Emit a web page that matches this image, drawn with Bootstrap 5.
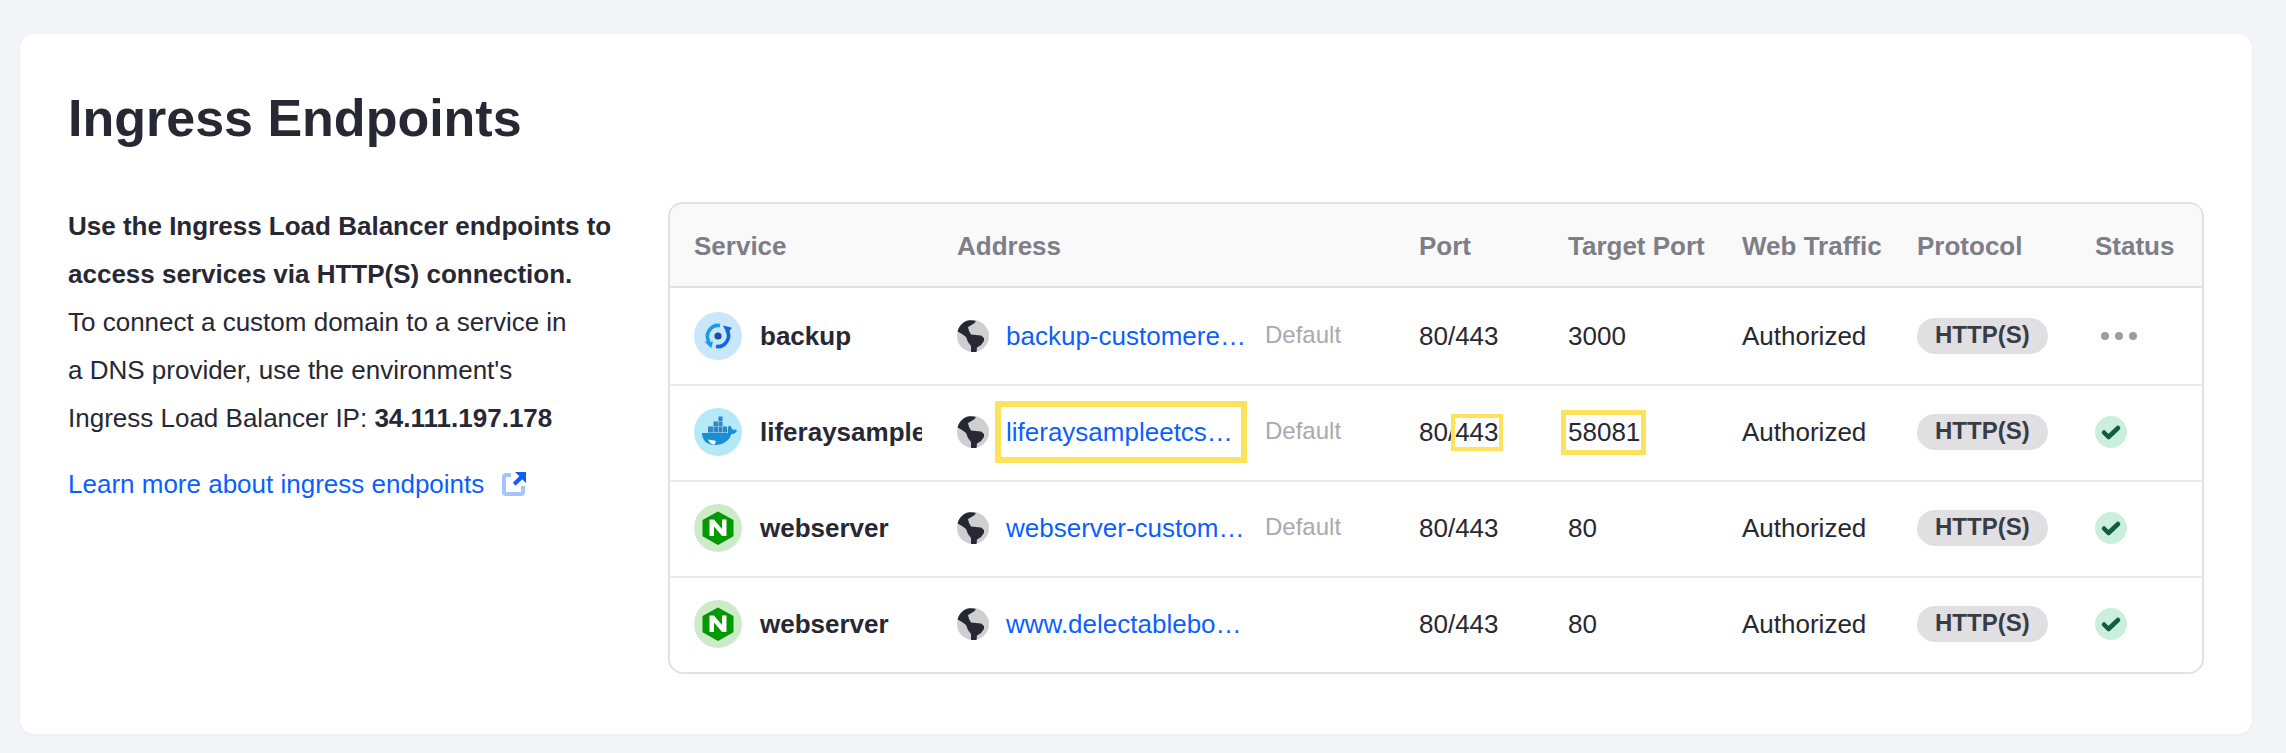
<!DOCTYPE html>
<html lang="en">
<head>
<meta charset="utf-8">
<title>Ingress Endpoints</title>
<link href="https://cdn.jsdelivr.net/npm/bootstrap@5.3.0/dist/css/bootstrap.min.css" rel="stylesheet">
<style>
html,body{height:753px;overflow:hidden}
body{background:#f4f5f9;font-family:"Liberation Sans",Arial,sans-serif;color:#272833;padding:34px 20px 0}
.panel{background:#fff;border-radius:14px;width:2232px;height:700px;padding:52px 48px;box-shadow:0 1px 4px rgba(0,0,0,.05)}
.panel h1{font-size:52px;line-height:64px;font-weight:700;margin:0 0 52px;font-family:"Liberation Sans",Arial,sans-serif;color:#272833}
.side{width:600px;flex:none;font-size:26px;line-height:48px}
.learn{display:flex;align-items:center;margin-top:18px;color:#0b5fff;text-decoration:none}
.learn svg{margin-left:18px}
.tbl-wrap{width:1536px;height:472px;border:2px solid #e1e1e3;border-radius:15px;overflow:hidden}
.etable{width:1532px;table-layout:fixed;border-collapse:separate;border-spacing:0;margin:0;font-size:26px}
.etable th{height:84px;background:#f9f9fa;color:#7d7e87;font-weight:700;padding:2px 0 0;vertical-align:middle;border-bottom:2px solid #e1e1e3;white-space:nowrap}
.etable td{height:96px;padding:0 0 2px;vertical-align:middle;border-bottom:2px solid #eaeaec;white-space:nowrap;color:#272833}
.etable tbody tr:first-child td{height:98px;padding-bottom:0}
.etable tr:last-child td{border-bottom:0;height:94px}
.etable .cell-first{padding-left:24px}
.svc{display:flex;align-items:center;gap:18px;width:228px;overflow:hidden;font-weight:700}
.svc svg{flex:none}
.addr{display:flex;align-items:center}
.addr svg{flex:none}
.addr a{display:block;width:241px;margin-left:17px;white-space:nowrap;color:#0b5fff;text-decoration:none}
.addr .hl{box-sizing:border-box;width:252px;height:62px;line-height:50px;margin-left:6px;padding:0 6px 0 5px;border:6px solid #fde35c}
.dflt{margin-left:18px;font-size:24px;color:#a9a9ae;position:relative;top:-1px}
.hlbox-port{display:inline-block;border:4px solid #fde35c;line-height:29px;margin-left:-4px}
.hlbox-target{display:inline-block;border:5px solid #fde35c;line-height:35px;margin-left:-7px;padding:0 1px 0 2px}
.pill{display:block;width:fit-content;background:#e0e0e2;border-radius:18px;height:36px;line-height:33px;padding:0 18px;font-weight:700;font-size:24px;color:#3a3b46}
.dots{display:flex;gap:6px;margin-left:6px}
.dots i{display:block;width:8px;height:8px;border-radius:50%;background:#9b9ca5}
.w-svc{width:287px}.w-addr{width:462px}.w-port{width:149px}.w-tp{width:174px}.w-web{width:175px}.w-pro{width:178px}
.stat{display:block}
</style>
</head>
<body>
<svg width="0" height="0" class="d-block" aria-hidden="true">
<defs>
<symbol id="globe" viewBox="0 0 32 32">
<circle cx="16" cy="16" r="16" fill="#cfcfd2"/>
<path fill="#272833" d="M8 1.600C11 0 15-.2 19 1L17 3.500 11 7l1 4 2 3.500 10 1L27 18v3L24 25l-4 2.500L19.500 32H14V26L11 22 9 17 5 14 .5 11.500C1.500 7.500 4 4 8 1.600Z"/>
</symbol>
<symbol id="nginx" viewBox="0 0 48 48">
<circle cx="24" cy="24" r="24" fill="#cdebc9"/>
<path fill="#009900" stroke="#009900" stroke-width="2" stroke-linejoin="round" d="M24 8.500l14.500 8.200v15L24 40 9.500 31.700v-15Z"/>
<path fill="#fff" d="M15.500 32V15.500H20L28 25V15.500h4.500V32H28L20 22.500V32Z"/>
</symbol>
<symbol id="check" viewBox="0 0 32 32">
<circle cx="16" cy="16" r="16" fill="#cbeedd"/>
<path fill="none" stroke="#0f5f3d" stroke-width="4.500" stroke-linecap="round" stroke-linejoin="round" d="M9 16.500l4.500 4.500L23 12"/>
</symbol>
</defs>
</svg>
<main class="panel">
<h1>Ingress Endpoints</h1>
<div class="d-flex">
<section class="side">
<div class="fw-bold">Use the Ingress Load Balancer endpoints to<br>access services via HTTP(S) connection.</div>
<div>To connect a custom domain to a service in<br>a DNS provider, use the environment's<br>Ingress Load Balancer IP: <b>34.111.197.178</b></div>
<a class="learn" href="#">Learn more about ingress endpoints
<svg width="24" height="24" viewBox="0 0 24 24"><path fill="none" stroke="#a6c4fb" stroke-width="4" d="M9 3H4a2 2 0 0 0-2 2v15a2 2 0 0 0 2 2h15a2 2 0 0 0 2-2v-6"/><path fill="#0b5fff" d="M13 0h11v11l-3.800-3.800-6.500 6.500-2.900-2.900 6.500-6.500Z"/></svg>
</a>
</section>
<div class="tbl-wrap">
<table class="etable">
<colgroup><col class="w-svc"><col class="w-addr"><col class="w-port"><col class="w-tp"><col class="w-web"><col class="w-pro"><col></colgroup>
<thead><tr><th class="cell-first">Service</th><th>Address</th><th>Port</th><th>Target Port</th><th>Web Traffic</th><th>Protocol</th><th>Status</th></tr></thead>
<tbody>
<tr>
<td class="cell-first"><div class="svc"><svg width="48" height="48" viewBox="0 0 48 48"><circle cx="24" cy="24" r="24" fill="#c9e6fb"/><circle cx="24" cy="24" r="3.600" fill="#1c4fa8"/><path fill="none" stroke="#1b9ae6" stroke-width="3.600" d="M26 13.500A11 11 0 0 0 15 30"/><path fill="#1b9ae6" d="M10.500 29.500l8.500.2-1.800 6.500Z"/><path fill="none" stroke="#0f6ad8" stroke-width="3.600" d="M22 34.500A11 11 0 0 0 33 18"/><path fill="#0f6ad8" d="M29 13.500l9 2.300-5 6Z"/></svg>backup</div></td>
<td><div class="addr"><svg width="32" height="32"><use href="#globe"/></svg><a href="#">backup-customere…</a><span class="dflt">Default</span></div></td>
<td>80/443</td><td>3000</td><td>Authorized</td><td><span class="pill">HTTP(S)</span></td>
<td><div class="dots"><i></i><i></i><i></i></div></td>
</tr>
<tr>
<td class="cell-first"><div class="svc"><svg width="48" height="48" viewBox="0 0 48 48"><circle cx="24" cy="24" r="24" fill="#b6e9f8"/><path fill="#1a8fd6" d="M8 25h26c-.8-2.500-.3-5.500 1.300-7.700 1.700 1.200 2.700 2.800 3 4.500 1.800-.4 3.500-.1 4.700.7-1 2.500-3.200 3.800-5.800 3.800C35.500 33 29 37 21 37 12.500 37 8 32 8 25Z"/><path fill="#2f86c9" d="M14 18.500h5v6h-5ZM19.500 18.500h4.500v6h-4.500ZM24.500 18.500h4v6h-4ZM29 18.500h4v6h-4ZM19.500 13.500h4.500v4.500h-4.500ZM24.500 13.500h4v4.500h-4ZM24.500 8.500h4V13h-4Z"/><path fill="#fff" d="M14 31.500c3.500 1 6 .5 8 1.500l-1.500 3.800c-3-.3-5.500-2.300-6.500-5.300Z"/></svg>liferaysample</div></td>
<td><div class="addr"><svg width="32" height="32"><use href="#globe"/></svg><a class="hl" href="#">liferaysampleetcs…</a><span class="dflt">Default</span></div></td>
<td>80/<span class="hlbox-port">443</span></td><td><span class="hlbox-target">58081</span></td><td>Authorized</td><td><span class="pill">HTTP(S)</span></td>
<td><svg class="stat" width="32" height="32"><use href="#check"/></svg></td>
</tr>
<tr>
<td class="cell-first"><div class="svc"><svg width="48" height="48"><use href="#nginx"/></svg>webserver</div></td>
<td><div class="addr"><svg width="32" height="32"><use href="#globe"/></svg><a href="#">webserver-custom…</a><span class="dflt">Default</span></div></td>
<td>80/443</td><td>80</td><td>Authorized</td><td><span class="pill">HTTP(S)</span></td>
<td><svg class="stat" width="32" height="32"><use href="#check"/></svg></td>
</tr>
<tr>
<td class="cell-first"><div class="svc"><svg width="48" height="48"><use href="#nginx"/></svg>webserver</div></td>
<td><div class="addr"><svg width="32" height="32"><use href="#globe"/></svg><a href="#">www.delectablebo…</a></div></td>
<td>80/443</td><td>80</td><td>Authorized</td><td><span class="pill">HTTP(S)</span></td>
<td><svg class="stat" width="32" height="32"><use href="#check"/></svg></td>
</tr>
</tbody>
</table>
</div>
</div>
</main>
</body>
</html>
